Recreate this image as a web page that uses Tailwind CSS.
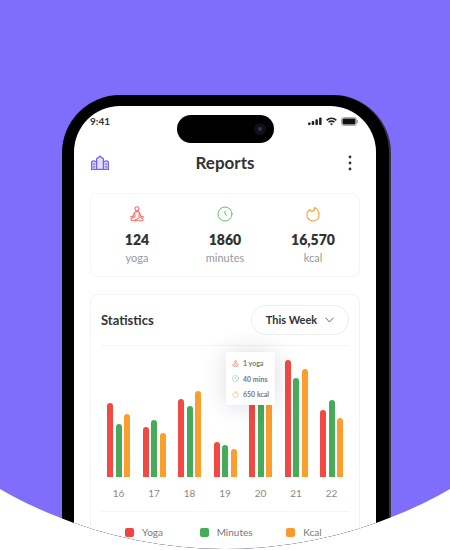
<!DOCTYPE html>
<html lang="en">
<head>
<meta charset="utf-8">
<meta name="viewport" content="width=device-width, initial-scale=1">
<title>Reports</title>
<script src="https://cdn.jsdelivr.net/npm/@tailwindcss/browser@4"></script>
</head>
<body class="bg-white font-['Lato',sans-serif] text-[#333]">
<svg class="hidden" aria-hidden="true">
  <symbol id="yoga" viewBox="0 0 16 16" fill="none" stroke="currentColor" stroke-width="1.1" stroke-linecap="round" stroke-linejoin="round">
    <circle cx="8" cy="2.8" r="2"/>
    <path d="M8 5.6C6 5.6 5.2 6.6 4.9 8L3.8 10.4L1.2 11M8 5.6C10 5.6 10.8 6.6 11.1 8L12.2 10.4L14.8 11M6 8.2V10.8L2.5 12.4C1.6 13 2 14.8 3 14.8H13C14 14.8 14.4 13 13.5 12.4L10 10.8V8.2M5.6 14.2L9.6 12.2"/>
  </symbol>
  <symbol id="clock" viewBox="0 0 16 16" fill="none" stroke="currentColor" stroke-linecap="round" stroke-linejoin="round">
    <circle cx="8" cy="8" r="7"/><path d="M8 5.2V8.2L9.4 9.4"/>
  </symbol>
  <symbol id="flame" viewBox="0 0 16 16" fill="none" stroke="currentColor" stroke-width="1.3" stroke-linecap="round" stroke-linejoin="round">
    <path d="M9.5 1.5C9.8 3.4 9 4.6 7.6 5.2C6.7 5.6 5.6 5 5.2 3.6C3 4.8 2 7 2 9.2C2 12.6 4.6 14.8 8 14.8C11.4 14.8 14 12.6 14 9.2C14 6.4 12.4 3 9.5 1.5Z"/>
  </symbol>
</svg>

<main class="flex h-screen justify-center overflow-hidden bg-[#7f6dfb] pt-[95px] pl-[3px] [clip-path:circle(452px_at_50%_97px)]">
  <div class="h-[640px] w-[329px] shrink-0 rounded-t-[58px] border-r-2 border-[#35323f] bg-black pt-[11px] pr-[13px] pl-3">
    <div class="relative h-full overflow-hidden rounded-t-[46px] bg-white px-4 pt-px">
      <div class="absolute top-[9px] left-[103px] flex h-7 w-[97px] items-center justify-end rounded-full bg-black pr-2">
        <span class="flex size-3 items-center justify-center rounded-full bg-[#10101c]"><span class="size-1 rounded-full bg-[#34344a]"></span></span>
      </div>

      <header>
        <div class="flex h-7 items-center justify-between pr-[2px]">
          <span class="text-[10px] leading-3 font-bold">9:41</span>
          <div class="flex items-center gap-1 text-[#222]">
            <svg class="h-[9px] w-[14px]" viewBox="0 0 14 9" fill="currentColor"><rect x="0" y="5.5" width="2.5" height="2.5" rx=".8"/><rect x="3.7" y="4" width="2.5" height="4" rx=".8"/><rect x="7.4" y="2.3" width="2.5" height="5.7" rx=".8"/><rect x="11.1" y=".5" width="2.5" height="7.5" rx=".8"/></svg>
            <svg class="h-[9px] w-[11px]" viewBox="0 0 11 9" fill="none" stroke="currentColor" stroke-width="1.6"><path d="M.7 3.4C3.3.6 7.7.6 10.3 3.4M2.6 5.3C4.2 3.7 6.8 3.7 8.4 5.3"/><path d="M4 6.8L5.5 8.4L7 6.8Q5.5 5.6 4 6.8Z" fill="currentColor" stroke="none"/></svg>
            <svg class="h-[9px] w-[17px]" viewBox="0 0 17 9"><rect x=".5" y=".5" width="15" height="8" rx="2" fill="none" stroke="#aaa"/><rect x="1.5" y="1.5" width="13" height="6" rx="1" fill="#111"/><path d="M16.5 3.2V5.8" stroke="#999"/></svg>
          </div>
        </div>
        <div class="mt-4 flex h-6 items-center justify-between">
          <svg class="h-4 w-5 text-[#7463ee]" viewBox="0 0 20 16" fill="none" stroke="currentColor" stroke-width="1.3" stroke-linejoin="round" stroke-linecap="round"><path fill="#e4e0fd" d="M1.6 14.4V8Q1.6 5.8 3.6 5.8Q5.4 5.8 6.6 7.4V4Q6.8 3.2 8 2.9L10 1.1L12 2.9Q13.2 3.2 13.4 4V7.4Q14.6 5.8 16.4 5.8Q18.4 5.8 18.4 8V14.4Z"/><path d="M6.6 7V14M13.4 7V14M3.2 9.2H4.8M15.2 9.2H16.8M3.2 11.8H4.8M15.2 11.8H16.8"/></svg>
          <h1 class="text-[17px] leading-6 font-bold">Reports</h1>
          <button type="button" aria-label="More options" class="flex h-6 w-5 items-center justify-center">
            <svg class="h-4 w-1" viewBox="0 0 4 16" fill="#333"><circle cx="2" cy="2" r="1.4"/><circle cx="2" cy="8" r="1.4"/><circle cx="2" cy="14" r="1.4"/></svg>
          </button>
        </div>
      </header>

      <section aria-label="Totals" class="mt-[18px] grid h-[84px] grid-cols-3 rounded-lg border border-[#f5f5f5] px-[2px] pt-3 text-center">
        <div class="flex flex-col items-center">
          <svg class="size-4 text-[#f2726b]"><use href="#yoga"/></svg>
          <span class="mt-2 text-[14px] leading-5 font-extrabold">124</span>
          <span class="text-[11px] leading-4 text-[#999]">yoga</span>
        </div>
        <div class="flex flex-col items-center">
          <svg class="size-4 text-[#68b877]"><use href="#clock"/></svg>
          <span class="mt-2 text-[14px] leading-5 font-extrabold">1860</span>
          <span class="text-[11px] leading-4 text-[#999]">minutes</span>
        </div>
        <div class="flex flex-col items-center">
          <svg class="size-4 text-[#f8ac4e]"><use href="#flame"/></svg>
          <span class="mt-2 text-[14px] leading-5 font-extrabold">16,570</span>
          <span class="text-[11px] leading-4 text-[#999]">kcal</span>
        </div>
      </section>

      <section class="mt-[17px] rounded-t-lg border border-[#f3f3f3] px-[10px] pt-[10px] pb-10">
        <div class="flex items-center justify-between border-b border-[#f5f5f5] pb-[10px]">
          <h2 class="text-[13px] leading-4 font-bold">Statistics</h2>
          <button type="button" class="flex h-[30px] w-[98px] items-center justify-center gap-2 rounded-full border border-[#eee] text-[11px] leading-4 font-bold">This Week
            <svg class="h-[6px] w-[9px]" viewBox="0 0 9 6" fill="none" stroke="#666" stroke-linecap="round"><path d="M.8 1L4.5 5L8.2 1"/></svg>
          </button>
        </div>

        <div class="relative">
          <div id="chart" class="mt-3 flex h-[119px] items-end justify-between pr-[6px] pl-[6px]"></div>
          <div id="days" class="mt-2 flex justify-between px-[6px] text-[10px] leading-4 text-[#888]"></div>
          <div class="absolute -top-[6px] left-[125px] flex h-[53px] w-[49px] flex-col justify-between rounded-xs bg-white px-[6px] py-1 text-[7px] leading-[14px] font-bold text-[#777] shadow-[0_0_24px_rgba(40,40,80,0.16)]">
            <span class="flex items-center gap-1 whitespace-nowrap"><svg class="size-[7px] shrink-0 text-[#f2726b]"><use href="#yoga"/></svg>1 yoga</span>
            <span class="flex items-center gap-1 whitespace-nowrap"><svg class="size-[7px] shrink-0 text-[#68b877]"><use href="#clock"/></svg>40 mins</span>
            <span class="flex items-center gap-1 whitespace-nowrap"><svg class="size-[7px] shrink-0 text-[#f8ac4e]"><use href="#flame"/></svg>650 kcal</span>
          </div>
        </div>

        <ul class="mt-[10px] grid grid-cols-3 border-t border-[#f5f5f5] pt-3 pl-6 text-[10px] leading-4 text-[#777]">
          <li class="flex items-center gap-2"><span class="size-[9px] rounded-xs bg-[#f04444]"></span>Yoga</li>
          <li class="flex items-center gap-2"><span class="size-[9px] rounded-xs bg-[#43ac58]"></span>Minutes</li>
          <li class="flex items-center gap-2 pl-3"><span class="size-[9px] rounded-xs bg-[#fb9a2b]"></span>Kcal</li>
        </ul>
      </section>
    </div>
  </div>
</main>

<script>
const data = [[16,74,53,63],[17,50,57,44],[18,78,71,86],[19,35,32,28],[20,90,95,85],[21,117,99,108],[22,67,77,59]];
const colors = ['bg-[#f24a42]', 'bg-[#48ab59]', 'bg-[#fb9e2e]'];
document.getElementById('chart').innerHTML = data.map(([, ...v]) =>
  '<div class="flex w-[23px] items-end justify-between">' +
  v.map((h, i) => `<span class="w-[6px] rounded-t-full ${colors[i]}" style="height:${h}px"></span>`).join('') + '</div>').join('');
document.getElementById('days').innerHTML = data.map(([d]) => `<span class="w-[23px] text-center">${d}</span>`).join('');
</script>
</body>
</html>
